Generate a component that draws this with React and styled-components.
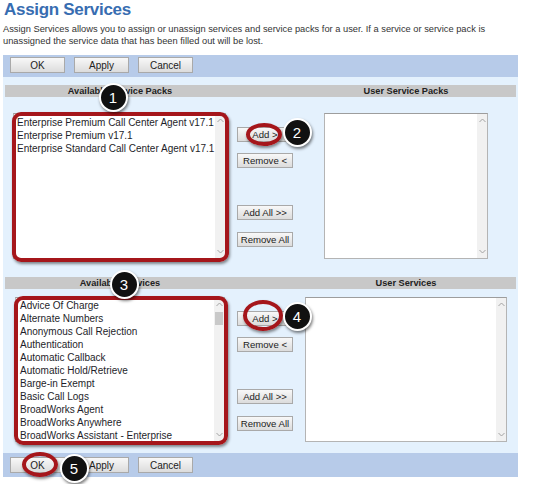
import React from 'react';
import styled, { createGlobalStyle } from 'styled-components';

const GlobalStyle = createGlobalStyle`
  body {
    margin: 0;
    background: #fff;
    font-family: "Liberation Sans", Arial, sans-serif;
  }
`;

const Page = styled.div`
  position: relative;
  width: 540px;
  height: 484px;
  padding-left: 3px;
  box-sizing: border-box;
  overflow: hidden;
  background: #fff;
`;

const Title = styled.h1`
  margin: 0;
  padding-left: 1px;
  font-size: 17px;
  letter-spacing: -0.3px;
  line-height: 20px;
  font-weight: bold;
  color: #376db1;
`;

const Intro = styled.p`
  margin: 3px 0 0;
  width: 515px;
  font-size: 9.3px;
  line-height: 12px;
  color: #333;
`;

const Form = styled.div`
  width: 515px;
  margin-top: 8px;
`;

const Toolbar = styled.div`
  display: flex;
  gap: 9px;
  height: ${(p) => p.$h}px;
  padding: ${(p) => p.$pt}px 0 0 7px;
  box-sizing: border-box;
  background: #b7cbe9;
`;

const ToolButton = styled.button`
  width: 55px;
  height: 16px;
  padding: 0;
  border: 1px solid #a9a9a9;
  background: linear-gradient(#f8f8f8, #dcdcdc);
  font-family: inherit;
  font-size: 10px;
  color: #222;
`;

const Body = styled.div`
  background: #e4f1fd;
  padding: 8px 2px 11px;
`;

const HeaderRow = styled.div`
  display: grid;
  grid-template-columns: 230px 61px 1fr;
  height: 12px;
  margin-top: ${(p) => p.$mt || 0}px;
  background: #c8c8c8;
  font-size: 9.2px;
  font-weight: bold;
  line-height: 12px;
  color: #222;
  text-align: center;
`;

const PickRow = styled.div`
  display: flex;
  align-items: flex-start;
  margin-top: ${(p) => p.$mt}px;
  padding-left: ${(p) => p.$pl}px;
`;

const ListBox = styled.div`
  display: flex;
  width: ${(p) => p.$w}px;
  height: ${(p) => p.$h}px;
  box-sizing: border-box;
  border: 1px solid #b4b4b4;
  border-top-color: #9d9d9d;
  background: #fff;
  overflow: hidden;
`;

const Items = styled.div`
  flex: 1;
  min-width: 0;
  padding: ${(p) => p.$pt}px 0 0 ${(p) => p.$pl}px;
  font-size: 10px;
  line-height: 13px;
  color: #1e1e2a;
  white-space: nowrap;
  overflow: hidden;
`;

const Track = styled.div`
  display: flex;
  flex-direction: column;
  width: 10px;
  flex-shrink: 0;
  background: #f1f1f1;
`;

const Arrow = styled.div`
  display: flex;
  align-items: center;
  justify-content: center;
  height: 13px;
  color: #a3a3a3;
`;

const Thumb = styled.div`
  height: 13px;
  margin: 1px 1px 0;
  background: #c9c9c9;
`;

const Rail = styled.div`
  flex: 1;
`;

const Mover = styled.div`
  display: flex;
  flex-direction: column;
  width: 56px;
  padding-top: 14px;
  margin: 0 ${(p) => p.$gr}px 0 ${(p) => p.$gl}px;
`;

const MoveButton = styled.button`
  height: 15px;
  padding: 0;
  margin-top: ${(p) => p.$mt || 0}px;
  border: 1px solid #a9a9a9;
  background: linear-gradient(#f8f8f8, #dcdcdc);
  font-family: inherit;
  font-size: 9.6px;
  color: #222;
  white-space: nowrap;
`;

/* callout overlays */
const Frame = styled.div`
  position: absolute;
  left: ${(p) => p.$x}px;
  top: ${(p) => p.$y}px;
  width: ${(p) => p.$w}px;
  height: ${(p) => p.$h}px;
  box-sizing: border-box;
  border: 4px solid #a5161b;
  border-radius: ${(p) => (p.$round ? '50%' : '9px')};
  box-shadow: 1px 2px 3px rgba(0, 0, 0, 0.45);
`;

const Badge = styled.div`
  position: absolute;
  left: ${(p) => p.$cx - 14.5}px;
  top: ${(p) => p.$cy - 14.5}px;
  width: 29px;
  height: 29px;
  box-sizing: border-box;
  border: 2px solid #fff;
  border-radius: 50%;
  background: #111;
  box-shadow: 1px 2px 3px rgba(0, 0, 0, 0.5);
  color: #fff;
  font-size: 15px;
  line-height: 25px;
  text-align: center;
`;

const Chevron = ({ up }) => (
  <svg width="7" height="5" viewBox="0 0 7 5">
    <polyline
      points={up ? '0.5,4 3.5,1 6.5,4' : '0.5,1 3.5,4 6.5,1'}
      fill="none"
      stroke="currentColor"
      strokeWidth="1"
    />
  </svg>
);

const List = ({ w, h, pl, pt, items = [], thumb }) => (
  <ListBox $w={w} $h={h}>
    <Items $pl={pl} $pt={pt}>
      {items.map((it) => (
        <div key={it}>{it}</div>
      ))}
    </Items>
    <Track>
      <Arrow><Chevron up /></Arrow>
      {thumb && <Thumb />}
      <Rail />
      <Arrow><Chevron /></Arrow>
    </Track>
  </ListBox>
);

const MoveButtons = ({ gl, gr }) => (
  <Mover $gl={gl} $gr={gr}>
    <MoveButton>Add &gt;</MoveButton>
    <MoveButton $mt={11}>Remove &lt;</MoveButton>
    <MoveButton $mt={37}>Add All &gt;&gt;</MoveButton>
    <MoveButton $mt={12}>Remove All</MoveButton>
  </Mover>
);

const Actions = ({ h, pt }) => (
  <Toolbar $h={h} $pt={pt}>
    <ToolButton>OK</ToolButton>
    <ToolButton>Apply</ToolButton>
    <ToolButton>Cancel</ToolButton>
  </Toolbar>
);

const packs = [
  'Enterprise Premium Call Center Agent v17.1',
  'Enterprise Premium v17.1',
  'Enterprise Standard Call Center Agent v17.1',
];

const services = [
  'Advice Of Charge',
  'Alternate Numbers',
  'Anonymous Call Rejection',
  'Authentication',
  'Automatic Callback',
  'Automatic Hold/Retrieve',
  'Barge-in Exempt',
  'Basic Call Logs',
  'BroadWorks Agent',
  'BroadWorks Anywhere',
  'BroadWorks Assistant - Enterprise',
];

const App = () => (
  <Page>
    <GlobalStyle />
    <Title>Assign Services</Title>
    <Intro>
      Assign Services allows you to assign or unassign services and service packs for a user. If a
      service or service pack is unassigned the service data that has been filled out will be lost.
    </Intro>
    <Form>
      <Actions h={22} pt={2} />
      <Body>
        <HeaderRow>
          <span>Available Service Packs</span>
          <span />
          <span>User Service Packs</span>
        </HeaderRow>
        <PickRow $mt={16} $pl={8}>
          <List w={213} h={146} pl={3} pt={2} items={packs} />
          <MoveButtons gl={11} gr={31} />
          <List w={164} h={146} pl={3} pt={2} />
        </PickRow>
        <HeaderRow $mt={18}>
          <span>Available Services</span>
          <span />
          <span>User Services</span>
        </HeaderRow>
        <PickRow $mt={8} $pl={10}>
          <List w={210} h={145} pl={4} pt={1} items={services} thumb />
          <MoveButtons gl={12} gr={12} />
          <List w={202} h={145} pl={3} pt={2} />
        </PickRow>
      </Body>
      <Actions h={24} pt={4} />
    </Form>

    <Frame $x={12} $y={112} $w={217} $h={150} />
    <Frame $x={14} $y={296} $w={214} $h={149} />
    <Frame $x={246} $y={123} $w={36} $h={23} $round />
    <Frame $x={243} $y={300} $w={40} $h={31} $round />
    <Frame $x={22} $y={452} $w={36} $h={25} $round />

    <Badge $cx={113} $cy={97.5}>1</Badge>
    <Badge $cx={297} $cy={132}>2</Badge>
    <Badge $cx={124} $cy={284}>3</Badge>
    <Badge $cx={297} $cy={316}>4</Badge>
    <Badge $cx={74} $cy={468}>5</Badge>
  </Page>
);

export default App;
